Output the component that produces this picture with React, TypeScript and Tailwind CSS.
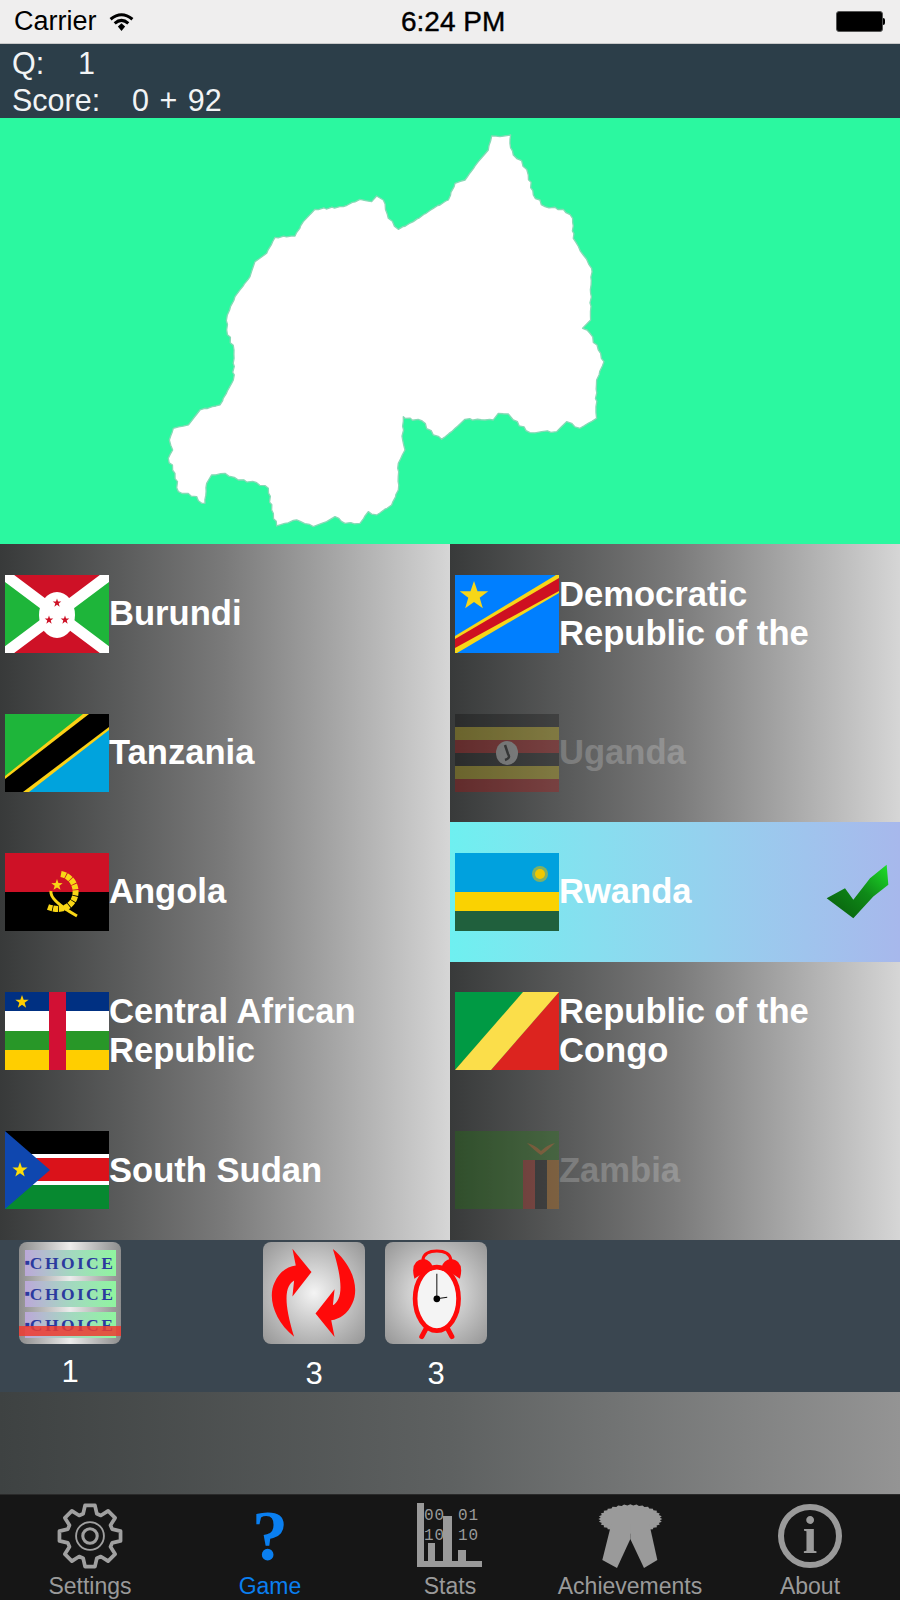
import type { ReactNode } from 'react'

const FONT = "font-['Liberation_Sans',Arial,sans-serif]"

// Rwanda outline, traced at 3x from the map area
const OUTLINE = [
  1025, 48, 1050, 50, 1082, 45, 1080, 70, 1090, 105, 1115, 122, 1135, 165, 1150, 225, 1185, 260, 1240, 268, 1268, 295,
  1270, 355, 1300, 405, 1325, 445, 1322, 520, 1322, 600, 1298, 625, 1320, 640, 1345, 690, 1362, 725, 1340, 780, 1338,
  860, 1340, 895, 1290, 925, 1250, 905, 1220, 935, 1175, 935, 1140, 938, 1090, 900, 1075, 882, 1045, 880, 1030, 900,
  945, 898, 905, 935, 875, 958, 850, 945, 815, 902, 765, 895, 760, 890, 758, 960, 765, 990, 745, 1030, 745, 1110, 725,
  1155, 680, 1185, 655, 1175, 630, 1210, 585, 1210, 555, 1190, 530, 1205, 490, 1220, 440, 1200, 380, 1218, 365, 1170,
  355, 1105, 320, 1088, 265, 1080, 225, 1060, 185, 1065, 170, 1090, 165, 1150, 155, 1150, 140, 1130, 85, 1115, 75, 1060,
  55, 1015, 68, 990, 58, 960, 70, 925, 115, 915, 150, 870, 210, 855, 250, 780, 252, 690, 230, 630, 232, 585, 255, 530,
  300, 470, 315, 425, 350, 400, 375, 352, 435, 348, 460, 305, 495, 268, 580, 260, 630, 238, 665, 245, 680, 228, 700,
  240, 715, 295, 745, 328, 790, 305, 850, 265, 895, 240, 915, 190, 945, 180, 985, 125, 1015, 90,
]

function roughOutline() {
  const pts: string[] = []
  const n = OUTLINE.length / 2
  for (let i = 0; i < n; i++) {
    const x = OUTLINE[i * 2]
    const y = OUTLINE[i * 2 + 1]
    const nx = OUTLINE[((i + 1) % n) * 2]
    const ny = OUTLINE[((i + 1) % n) * 2 + 1]
    pts.push(`${x},${y}`)
    const steps = Math.floor(Math.hypot(nx - x, ny - y) / 12)
    for (let s = 1; s < steps; s++) {
      const j = Math.sin(i * 12.9 + s * 78.2) * 2.5
      pts.push(`${x + ((nx - x) * s) / steps + j},${y + ((ny - y) * s) / steps - j}`)
    }
  }
  return pts.join(' ')
}

function starPoints(cx: number, cy: number, r: number) {
  const pts: string[] = []
  for (let i = 0; i < 10; i++) {
    const rad = i % 2 === 0 ? r : r * 0.4
    const a = -Math.PI / 2 + (i * Math.PI) / 5
    pts.push(`${cx + rad * Math.cos(a)},${cy + rad * Math.sin(a)}`)
  }
  return pts.join(' ')
}

function FlagSvg({ children, dim }: { children: ReactNode; dim?: boolean }) {
  return (
    <svg viewBox="0 0 104 78" className={`h-[78px] w-[104px] shrink-0 ${dim ? 'opacity-25' : ''}`}>
      {children}
    </svg>
  )
}

function Burundi() {
  return (
    <FlagSvg>
      <rect width="104" height="78" fill="#1eb53a" />
      <polygon points="0,0 104,0 52,39" fill="#ce1126" />
      <polygon points="0,78 104,78 52,39" fill="#ce1126" />
      <path d="M0 0 L104 78 M104 0 L0 78" stroke="#fff" strokeWidth="11" />
      <ellipse cx="52" cy="40" rx="18" ry="23" fill="#fff" />
      <polygon points={starPoints(52, 28, 4.5)} fill="#ce1126" />
      <polygon points={starPoints(44, 45, 4.5)} fill="#ce1126" />
      <polygon points={starPoints(60, 45, 4.5)} fill="#ce1126" />
    </FlagSvg>
  )
}

function Tanzania() {
  return (
    <FlagSvg>
      <polygon points="0,78 0,0 104,0" fill="#1eb53a" />
      <polygon points="0,78 104,78 104,0" fill="#00a3dd" />
      <polygon points="0,62 78,0 104,0 104,16 24,78 0,78" fill="#fcd116" />
      <polygon points="0,65 84,0 104,0 104,13 18,78 0,78" fill="#000" />
    </FlagSvg>
  )
}

function Angola() {
  return (
    <FlagSvg>
      <rect width="104" height="39" fill="#ce1126" />
      <rect y="39" width="104" height="39" fill="#000" />
      <path d="M56 21 A18 18 0 0 1 68 48 Q60 60 43 54" fill="none" stroke="#f9d616" strokeWidth="6" strokeDasharray="5 0.8" />
      <polygon points={starPoints(52, 32, 6)} fill="#f9d616" />
      <path d="M46 38 Q44 47 72 63" fill="none" stroke="#f9d616" strokeWidth="3" />
    </FlagSvg>
  )
}

function CentralAfrica() {
  return (
    <FlagSvg>
      <rect width="104" height="20" fill="#003082" />
      <rect y="19" width="104" height="20" fill="#fff" />
      <rect y="39" width="104" height="20" fill="#289728" />
      <rect y="58" width="104" height="20" fill="#ffce00" />
      <rect x="44" width="17" height="78" fill="#d21034" />
      <polygon points={starPoints(17, 10, 7)} fill="#ffce00" />
    </FlagSvg>
  )
}

function SouthSudan() {
  return (
    <FlagSvg>
      <rect width="104" height="24" fill="#000" />
      <rect y="23" width="104" height="5" fill="#fff" />
      <rect y="27" width="104" height="24" fill="#da121a" />
      <rect y="50" width="104" height="5" fill="#fff" />
      <rect y="54" width="104" height="24" fill="#078930" />
      <polygon points="0,0 45,39 0,78" fill="#0f47af" />
      <polygon points={starPoints(15, 39, 8)} fill="#fcdd09" />
    </FlagSvg>
  )
}

function Congo() {
  return (
    <FlagSvg>
      <polygon points="0,78 0,0 70,0" fill="#009a44" />
      <polygon points="104,0 104,78 36,78" fill="#dc241f" />
      <polygon points="0,78 68,0 104,0 36,78" fill="#fbde4a" />
    </FlagSvg>
  )
}

function DrCongo() {
  return (
    <FlagSvg>
      <rect width="104" height="78" fill="#007fff" />
      <polygon points="0,61 101,0 104,0 104,18 2,78 0,78" fill="#f7d618" />
      <polygon points="0,64 104,3 104,16 0,73" fill="#ce1021" />
      <polygon points={starPoints(19, 21, 15)} fill="#f7d618" />
    </FlagSvg>
  )
}

function Uganda() {
  return (
    <FlagSvg dim>
      <rect width="104" height="13" fill="#000" />
      <rect y="13" width="104" height="13" fill="#fcdc04" />
      <rect y="26" width="104" height="13" fill="#d90000" />
      <rect y="39" width="104" height="13" fill="#000" />
      <rect y="52" width="104" height="13" fill="#fcdc04" />
      <rect y="65" width="104" height="13" fill="#d90000" />
      <ellipse cx="52" cy="39" rx="11" ry="12" fill="#fff" />
      <path d="M50 31 L53 40 Q56 44 50 46" fill="none" stroke="#000" strokeWidth="2.5" />
    </FlagSvg>
  )
}

function Rwanda() {
  return (
    <FlagSvg>
      <rect width="104" height="39" fill="#00a1de" />
      <rect y="39" width="104" height="20" fill="#fad201" />
      <rect y="58" width="104" height="20" fill="#20603d" />
      <circle cx="85" cy="21" r="8" fill="#e5be01" opacity="0.55" />
      <circle cx="85" cy="21" r="5" fill="#f0c800" />
    </FlagSvg>
  )
}

function Zambia() {
  return (
    <FlagSvg dim>
      <rect width="104" height="78" fill="#198a00" />
      <rect x="68" y="29" width="12" height="49" fill="#de2010" />
      <rect x="80" y="29" width="12" height="49" fill="#000" />
      <rect x="92" y="29" width="12" height="49" fill="#ef7d00" />
      <path d="M72 12 Q80 14 86 20 Q92 14 100 12 Q92 20 86 24 Q80 20 72 12Z" fill="#ef7d00" />
    </FlagSvg>
  )
}

function CheckMark() {
  return (
    <svg viewBox="1125 125 195 170" className="mr-[10px] h-[57px] w-[65px] shrink-0">
      <defs>
        <linearGradient id="check-green" x1="0" y1="1" x2="1" y2="0">
          <stop offset="0.2" stopColor="#0a6b10" />
          <stop offset="0.55" stopColor="#0f8a18" />
          <stop offset="1" stopColor="#1fe02a" />
        </linearGradient>
      </defs>
      <polygon
        points="1130,230 1185,200 1210,235 1260,170 1310,130 1315,190 1270,225 1210,290"
        fill="url(#check-green)"
      />
    </svg>
  )
}

function CountryRow({
  flag,
  children,
  correct,
  dim,
}: {
  flag: ReactNode
  children: ReactNode
  correct?: boolean
  dim?: boolean
}) {
  return (
    <div
      className={`flex h-full items-center pl-[5px] ${
        correct
          ? 'bg-linear-to-r from-[#6ef0f0] to-[#a7b8ec]'
          : 'bg-linear-to-r from-[#383a3a] via-[#7a7a7a] to-[#d6d6d6]'
      }`}
    >
      {flag}
      <span
        className={`min-w-0 flex-1 text-[34.6px] leading-[39px] font-bold text-white ${FONT} ${
          dim ? 'opacity-20' : ''
        }`}
      >
        {children}
      </span>
      {correct && <CheckMark />}
    </div>
  )
}

function StatusBar() {
  return (
    <div className="relative flex h-[44px] items-center border-b border-[#c9c9c9] bg-[#efeeee] text-black">
      <span className={`ml-[14px] text-[27px] ${FONT}`}>Carrier</span>
      <svg viewBox="0 0 28 22" className="ml-[11px] h-[20px] w-[27px]" fill="none" stroke="#000" strokeWidth="3.4">
        <path d="M2 8 Q14 -2 26 8" />
        <path d="M6.5 12.5 Q14 6 21.5 12.5" />
        <polygon points="10,16 14,12.5 18,16 14,21" fill="#000" stroke="none" />
      </svg>
      <span className={`absolute left-[401px] text-[28px] [-webkit-text-stroke:0.4px_black] ${FONT}`}>6:24 PM</span>
      <div className="absolute left-[836px] flex items-center">
        <div className="h-[21px] w-[47px] rounded-[3px] border border-[#555] bg-black" />
        <div className="h-[7px] w-[2px] rounded-r-sm bg-black" />
      </div>
    </div>
  )
}

function ScoreHeader() {
  return (
    <div className={`flex h-[74px] flex-col bg-[#2c3e49] pt-[1px] pl-[12px] text-[30.5px] leading-[37px] text-[#f2f4f5] ${FONT}`}>
      <div className="flex">
        <span className="w-[66px]">Q:</span>
        <span>1</span>
      </div>
      <div className="flex">
        <span className="w-[120px]">Score:</span>
        <span className="[word-spacing:2px]">0 + 92</span>
      </div>
    </div>
  )
}

function CountryMap() {
  return (
    <div className="h-[426px] bg-[#2bf8a0]">
      <svg viewBox="0 0 900 426" className="block h-full w-full">
        <polygon
          transform="translate(150 2) scale(0.3333)"
          points={roughOutline()}
          fill="#fff"
          stroke="#86d9b5"
          strokeWidth="4"
          strokeLinejoin="round"
        />
      </svg>
    </div>
  )
}

function ChoiceIcon() {
  return (
    <div className="relative flex h-[102px] w-[102px] flex-col gap-[5px] overflow-hidden rounded-[8px] bg-linear-to-r from-[#8d8d8d] via-[#ececec] to-[#8d8d8d] pt-[8px]">
      {[0, 1, 2].map((i) => (
        <div
          key={i}
          className="ml-[6px] flex h-[26px] w-[91px] items-center overflow-hidden bg-linear-to-r from-[#bba8d8] via-[#a3d8c0] to-[#8ff59f] font-['Liberation_Serif',serif] text-[17.5px] font-bold tracking-[2.4px] text-[#2b3a9e]"
        >
          <span className="text-[8px] tracking-normal">■</span>CHOICE
        </div>
      ))}
      <div className="absolute top-[84px] left-0 h-[10px] w-full bg-[#ee3b30]/85" />
    </div>
  )
}

function SwapIcon() {
  const arrow =
    'M880 318 C820 270 800 200 822 155 C835 125 860 108 885 105 L875 55 L932 125 L875 198 L880 150 C855 165 845 205 880 318Z'
  return (
    <div className="h-[102px] w-[102px] rounded-[8px] bg-radial from-[#f4f4f4] to-[#959595]">
      <svg viewBox="787 35 305 305" className="h-full w-full">
        <path d={arrow} fill="#ff0a0a" />
        <path d={arrow} fill="#ff0a0a" transform="rotate(180 938 187)" />
      </svg>
    </div>
  )
}

function ClockIcon() {
  return (
    <div className="h-[102px] w-[102px] rounded-[8px] bg-radial from-[#f4f4f4] to-[#959595]">
      <svg viewBox="1152 35 305 305" className="h-full w-full">
        <path d="M1265 88 Q1270 62 1307 62 Q1344 62 1349 88" fill="none" stroke="#ff0a0a" strokeWidth="9" />
        <path d="M1240 145 Q1225 90 1268 85 Q1290 92 1294 108Z" fill="#ff0a0a" />
        <path d="M1376 145 Q1391 90 1348 85 Q1326 92 1322 108Z" fill="#ff0a0a" />
        <path d="M1262 318 L1278 288 M1352 318 L1336 288" stroke="#ff0a0a" strokeWidth="15" strokeLinecap="round" />
        <ellipse cx="1307" cy="205" rx="65" ry="95" fill="#f4f4f4" stroke="#ff0a0a" strokeWidth="14" />
        <path d="M1307 205 L1307 130 M1307 205 L1338 200" stroke="#111" strokeWidth="3" />
        <circle cx="1307" cy="205" r="10" fill="#000" />
      </svg>
    </div>
  )
}

function PowerUps() {
  return (
    <div className={`flex h-[152px] items-start bg-[#3a4650] pt-[2px] text-[31px] font-normal text-white ${FONT}`}>
      <div className="ml-[19px] flex flex-col items-center">
        <ChoiceIcon />
        <span className="mt-[8px] leading-[40px]">1</span>
      </div>
      <div className="ml-[142px] flex flex-col items-center">
        <SwapIcon />
        <span className="mt-[10px] leading-[40px]">3</span>
      </div>
      <div className="ml-[20px] flex flex-col items-center">
        <ClockIcon />
        <span className="mt-[10px] leading-[40px]">3</span>
      </div>
    </div>
  )
}

function gearPath() {
  const teeth = 8
  const cmds: string[] = []
  for (let i = 0; i < teeth; i++) {
    const a = (i * 2 * Math.PI) / teeth
    const pt = (r: number, off: number) =>
      `${(32 + r * Math.cos(a + off)).toFixed(2)} ${(32 + r * Math.sin(a + off)).toFixed(2)}`
    cmds.push(`${i === 0 ? 'M' : 'L'}${pt(22.5, -0.3)}`, `L${pt(30, -0.16)}`, `L${pt(30, 0.16)}`, `L${pt(22.5, 0.3)}`)
  }
  return cmds.join(' ') + 'Z'
}

function ribbonPoints() {
  const pts: string[] = []
  for (let i = 0; i < 64; i++) {
    const k = i % 2 === 0 ? 1 : 0.93
    const a = (i * Math.PI) / 32
    pts.push(`${537 + 96 * k * Math.cos(a)},${115 + 44 * k * Math.sin(a)}`)
  }
  return pts.join(' ')
}

function TabItem({ label, icon, active }: { label: string; icon: ReactNode; active?: boolean }) {
  return (
    <div className="flex flex-col items-center">
      <div className="flex h-[68px] w-[80px] items-center justify-center">{icon}</div>
      <span className={`mt-[3px] text-[23px] leading-[26px] ${FONT} ${active ? 'text-[#0a7ff0]' : 'text-[#9a9a9a]'}`}>
        {label}
      </span>
    </div>
  )
}

function TabBar() {
  return (
    <div className="grid h-[106px] grid-cols-5 border-t border-[#2a2a2a] bg-[#161616] pt-[7px]">
      <TabItem
        label="Settings"
        icon={
          <svg viewBox="0 0 64 64" className="h-[66px] w-[66px]" fill="none" stroke="#a0a0a0">
            <path d={gearPath()} strokeWidth="3.6" strokeLinejoin="round" />
            <circle cx="32" cy="32" r="13.5" strokeWidth="1.8" />
            <circle cx="32" cy="32" r="7" strokeWidth="3" />
          </svg>
        }
      />
      <TabItem
        active
        label="Game"
        icon={<span className="h-[60px] font-['Liberation_Serif',serif] text-[72px] leading-[60px] font-bold text-[#0a7ff0]">?</span>}
      />
      <TabItem
        label="Stats"
        icon={
          <svg viewBox="417 1503 66 66" className="h-[66px] w-[66px]" fill="#9a9a9a">
            <rect x="417" y="1503" width="7" height="64" />
            <rect x="417" y="1561" width="65" height="6" />
            <rect x="428" y="1543" width="7" height="20" />
            <rect x="443" y="1516" width="9" height="47" />
            <rect x="458" y="1550" width="8" height="13" />
            <g className="font-['Liberation_Mono',monospace]" fontSize="16">
              <text x="424" y="1520" textLength="20">00</text>
              <text x="424" y="1540" textLength="20">10</text>
              <text x="458" y="1520" textLength="20">01</text>
              <text x="458" y="1540" textLength="20">10</text>
            </g>
          </svg>
        }
      />
      <TabItem
        label="Achievements"
        icon={
          <svg viewBox="440 70 195 195" className="h-[65px] w-[65px]" fill="#9a9a9a">
            <polygon points={ribbonPoints()} />
            <polygon points="480,130 537,130 537,175 497,262 453,238" />
            <polygon points="594,130 537,130 537,175 578,262 618,238" />
          </svg>
        }
      />
      <TabItem
        label="About"
        icon={
          <div className="flex h-[64px] w-[64px] items-center justify-center rounded-full border-[6px] border-[#9a9a9a] font-['Liberation_Serif',serif] text-[52px] leading-none font-bold text-[#9a9a9a]">
            i
          </div>
        }
      />
    </div>
  )
}

export default function App() {
  return (
    <div className="flex h-[1600px] w-[900px] flex-col overflow-hidden">
      <StatusBar />
      <ScoreHeader />
      <CountryMap />
      <div className="grid h-[696px] grid-cols-2 grid-rows-5">
        <CountryRow flag={<Burundi />}>Burundi</CountryRow>
        <CountryRow flag={<DrCongo />}>
          Democratic
          <br />
          Republic of the
        </CountryRow>
        <CountryRow flag={<Tanzania />}>Tanzania</CountryRow>
        <CountryRow flag={<Uganda />} dim>
          Uganda
        </CountryRow>
        <CountryRow flag={<Angola />}>Angola</CountryRow>
        <CountryRow flag={<Rwanda />} correct>
          Rwanda
        </CountryRow>
        <CountryRow flag={<CentralAfrica />}>Central African Republic</CountryRow>
        <CountryRow flag={<Congo />}>Republic of the Congo</CountryRow>
        <CountryRow flag={<SouthSudan />}>South Sudan</CountryRow>
        <CountryRow flag={<Zambia />} dim>
          Zambia
        </CountryRow>
      </div>
      <PowerUps />
      <div className="h-[102px] bg-linear-to-r from-[#3e4242] via-[#5e6161] to-[#949494]" />
      <TabBar />
    </div>
  )
}
